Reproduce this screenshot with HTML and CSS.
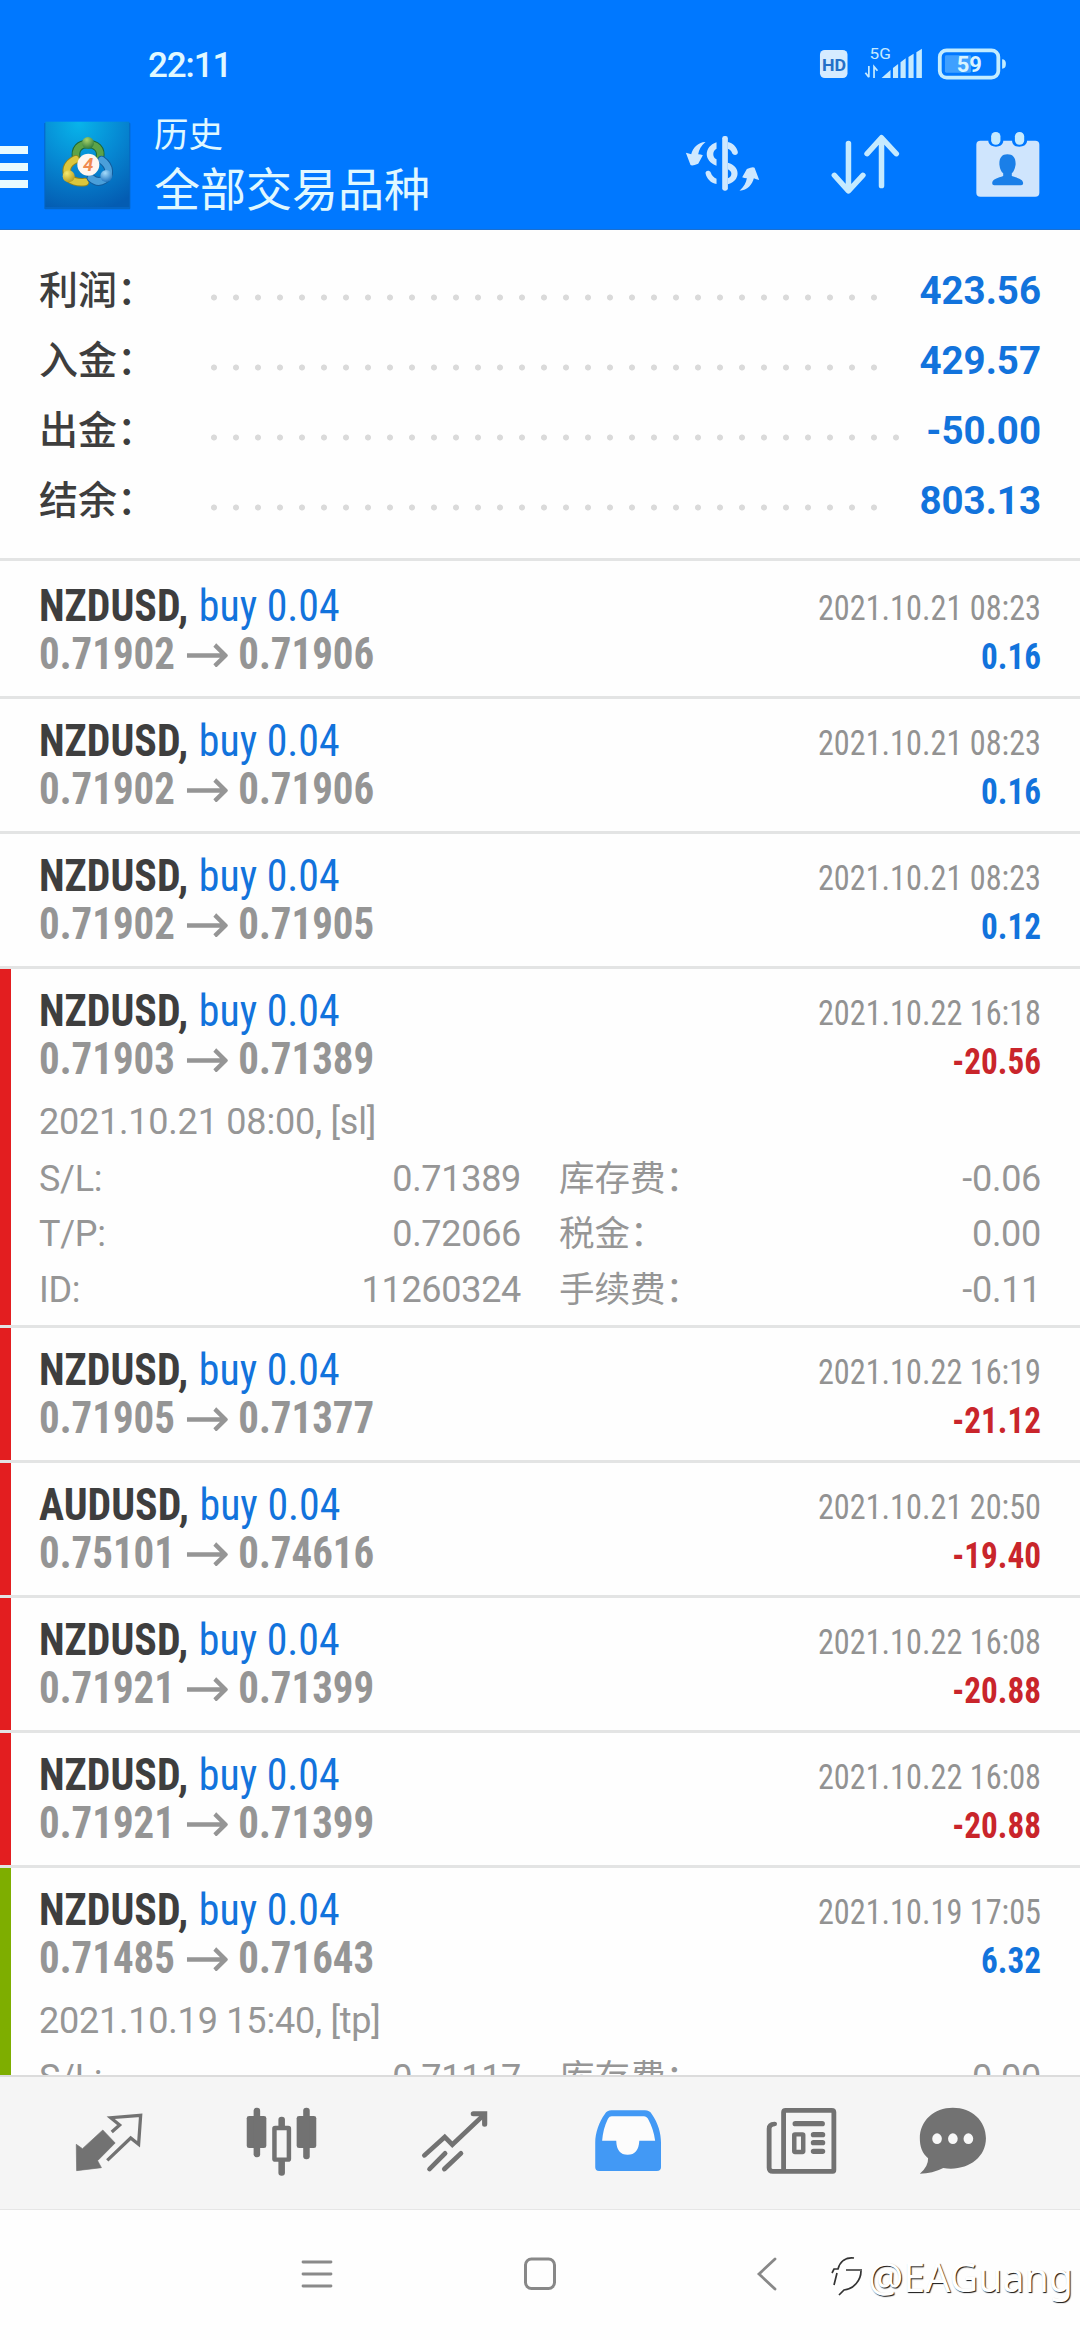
FILE: index.html
```html
<!DOCTYPE html>
<html lang="zh-CN">
<head>
<meta charset="utf-8">
<title>历史</title>
<link rel="stylesheet" href="styles.css">
</head>
<body>
<svg width="0" height="0" class="defs" aria-hidden="true">
  <symbol id="arrow" viewBox="0 0 44 24" preserveAspectRatio="none"><path d="M0 12.500H41M30 2L41.500 12.500L30 23" fill="none" stroke="#959595" stroke-width="4.500"/></symbol>
</svg>

<header class="header">
  <div class="status">
    <span class="time">22:11</span>
    <svg class="status-icons" viewBox="801.5 72 563.4 120" preserveAspectRatio="none">
      <rect x="813" y="90" width="80" height="84" rx="14" fill="#d5ebff"/>
      <text x="819" y="152" class="hd" textLength="70" lengthAdjust="spacingAndGlyphs">HD</text>
      <text x="957" y="116" class="net" textLength="62" lengthAdjust="spacingAndGlyphs">5G</text>
      <path d="M955 138V172M945 158L955 172M970 174V140L980 152" fill="none" stroke="#c5eaff" stroke-width="5"/>
      <path d="M992 174L1018 150V174ZM1025 174V144L1040 132V174ZM1047 174V127L1062 115V174ZM1070 174V111L1085 101V174ZM1093 174V97L1109 86V174Z" fill="#c5eaff"/>
      <rect x="1161" y="91" width="170" height="82" rx="20" fill="none" stroke="#c2ecff" stroke-width="11"/>
      <rect x="1176" y="106" width="76" height="52" rx="4" fill="#3fa0ff"/>
      <path d="M1342 118Q1353 118 1353 132T1342 146Z" fill="#c2ecff"/>
      <text x="1210" y="157" class="charge" textLength="73" lengthAdjust="spacingAndGlyphs">59</text>
    </svg>
  </div>
  <div class="appbar">
    <div class="burger"><i></i><i></i><i></i></div>
    <svg class="logo" viewBox="15 24 288 288">
      <defs>
        <radialGradient id="sky" cx=".4" cy=".02" r="1.05"><stop offset="0" stop-color="#08b4ea"/><stop offset=".5" stop-color="#0687d2"/><stop offset="1" stop-color="#045cb2"/></radialGradient>
        <radialGradient id="green" cx=".4" cy=".25" r=".8"><stop offset="0" stop-color="#a8d36a"/><stop offset="1" stop-color="#28763a"/></radialGradient>
        <radialGradient id="gold" cx=".35" cy=".25" r=".8"><stop offset="0" stop-color="#f6ea70"/><stop offset="1" stop-color="#b49a20"/></radialGradient>
        <radialGradient id="azure" cx=".4" cy=".25" r=".8"><stop offset="0" stop-color="#a5dcfb"/><stop offset="1" stop-color="#1a70bd"/></radialGradient>
      </defs>
      <rect x="28" y="38" width="258" height="260" rx="3" fill="#0565c2"/>
      <rect x="31" y="35" width="252" height="256" fill="url(#sky)"/>
      <g fill="none" stroke-linecap="round">
        <path d="M124 146C118 116 134 102 158 102S202 116 194 146" stroke="#1d6838" stroke-width="26"/>
        <path d="M124 146C118 116 134 102 158 102S202 116 194 146" stroke="#5da348" stroke-width="20"/>
        <path d="M122 148C92 162 90 186 102 205Q122 220 150 216" stroke="#8f8420" stroke-width="26"/>
        <path d="M122 148C92 162 90 186 102 205Q122 220 150 216" stroke="#dcc63c" stroke-width="20"/>
        <path d="M200 150C228 170 226 198 208 209Q188 222 168 204" stroke="#125c9c" stroke-width="26"/>
        <path d="M200 150C228 170 226 198 208 209Q188 222 168 204" stroke="#4a9fda" stroke-width="20"/>
      </g>
      <circle cx="159" cy="99" r="18" fill="url(#green)"/>
      <circle cx="101" cy="199" r="18" fill="url(#gold)"/>
      <circle cx="214" cy="198" r="18" fill="url(#azure)"/>
      <circle cx="160" cy="164" r="33" fill="#fff6ef"/>
      <text x="144" y="184" class="four">4</text>
    </svg>
    <div class="titles"><div class="sub">历史</div><div class="title">全部交易品种</div></div>
    <div class="actions">
      <svg viewBox="11.4 18 228 228" fill="#cfe8ff">
        <rect x="126" y="48" width="17" height="164" rx="7"/>
        <path d="M109 67C70 80 70 124 109 137V118C96 112 96 92 109 86ZM143 66C158 68 170 82 173 96C174 106 160 108 156 100Q153 89 143 86ZM76 160C75 151 88 149 92 158Q96 170 109 176V192C92 190 79 176 76 160ZM143 128C182 138 182 182 143 193V175C157 170 157 154 143 148Z"/>
        <path d="M17 98Q26 100 33 103C38 84 52 67 76 66C63 76 56 90 54 103Q62 103 68 106L54 131Q36 139 31 135Z"/>
        <path d="M17 98Q26 100 33 103C38 84 52 67 76 66C63 76 56 90 54 103Q62 103 68 106L54 131Q36 139 31 135Z" transform="rotate(180 127 139)"/>
      </svg>
      <svg viewBox="833.7 318 220.700 228" preserveAspectRatio="none">
        <path d="M896 370V512M855 466L896 513L938 466M992 354V497M950 401L992 353L1035 401" fill="none" stroke="#c5eaff" stroke-width="16" stroke-linecap="round" stroke-linejoin="round"/>
      </svg>
      <svg viewBox="1249.6 318 220.700 228" preserveAspectRatio="none">
        <rect x="1268" y="362" width="183" height="168" rx="12" fill="#cfe5fd"/>
        <path d="M1303 358H1346V366Q1342 380 1325 380T1303 366ZM1372 358H1415V366Q1411 380 1393 380T1372 366Z" fill="#0078ff"/>
        <rect x="1311" y="336" width="27" height="38" rx="13" fill="#c5eaff"/>
        <rect x="1380" y="336" width="27" height="38" rx="13" fill="#c5eaff"/>
        <path d="M1358 403C1375 403 1383 414 1382 434Q1379 452 1371 460V468C1386 474 1404 476 1404 490Q1404 496 1398 496H1320Q1314 496 1314 490C1314 476 1332 474 1346 468V460Q1337 452 1335 434C1334 414 1342 403 1358 403Z" fill="#1a7fe8"/>
      </svg>
    </div>
  </div>
</header>

<section class="summary">
  <div class="sum"><span>利润：</span><i></i><b>423.56</b></div>
  <div class="sum"><span>入金：</span><i></i><b>429.57</b></div>
  <div class="sum"><span>出金：</span><i></i><b>-50.00</b></div>
  <div class="sum"><span>结余：</span><i></i><b>803.13</b></div>
</section>

<main class="deals">
  <article class="deal first">
    <div class="head"><div class="left"><div class="sym"><b>NZDUSD,</b><span>buy 0.04</span></div><div class="price">0.71902<svg><use href="#arrow"/></svg>0.71906</div></div>
    <div class="right"><div class="date">2021.10.21 08:23</div><div class="pl">0.16</div></div></div>
  </article>
  <article class="deal">
    <div class="head"><div class="left"><div class="sym"><b>NZDUSD,</b><span>buy 0.04</span></div><div class="price">0.71902<svg><use href="#arrow"/></svg>0.71906</div></div>
    <div class="right"><div class="date">2021.10.21 08:23</div><div class="pl">0.16</div></div></div>
  </article>
  <article class="deal">
    <div class="head"><div class="left"><div class="sym"><b>NZDUSD,</b><span>buy 0.04</span></div><div class="price">0.71902<svg><use href="#arrow"/></svg>0.71905</div></div>
    <div class="right"><div class="date">2021.10.21 08:23</div><div class="pl">0.12</div></div></div>
  </article>
  <article class="deal open sl">
    <div class="head"><div class="left"><div class="sym"><b>NZDUSD,</b><span>buy 0.04</span></div><div class="price">0.71903<svg><use href="#arrow"/></svg>0.71389</div></div>
    <div class="right"><div class="date">2021.10.22 16:18</div><div class="pl loss">-20.56</div></div></div>
    <div class="note">2021.10.21 08:00, [sl]</div>
    <div class="details">
      <span>S/L:</span><span class="num">0.71389</span><span class="fee">库存费：</span><span class="num">-0.06</span>
      <span>T/P:</span><span class="num">0.72066</span><span class="fee">税金：</span><span class="num">0.00</span>
      <span>ID:</span><span class="num">11260324</span><span class="fee">手续费：</span><span class="num">-0.11</span>
    </div>
  </article>
  <article class="deal sl">
    <div class="head"><div class="left"><div class="sym"><b>NZDUSD,</b><span>buy 0.04</span></div><div class="price">0.71905<svg><use href="#arrow"/></svg>0.71377</div></div>
    <div class="right"><div class="date">2021.10.22 16:19</div><div class="pl loss">-21.12</div></div></div>
  </article>
  <article class="deal sl">
    <div class="head"><div class="left"><div class="sym"><b>AUDUSD,</b><span>buy 0.04</span></div><div class="price">0.75101<svg><use href="#arrow"/></svg>0.74616</div></div>
    <div class="right"><div class="date">2021.10.21 20:50</div><div class="pl loss">-19.40</div></div></div>
  </article>
  <article class="deal sl">
    <div class="head"><div class="left"><div class="sym"><b>NZDUSD,</b><span>buy 0.04</span></div><div class="price">0.71921<svg><use href="#arrow"/></svg>0.71399</div></div>
    <div class="right"><div class="date">2021.10.22 16:08</div><div class="pl loss">-20.88</div></div></div>
  </article>
  <article class="deal sl">
    <div class="head"><div class="left"><div class="sym"><b>NZDUSD,</b><span>buy 0.04</span></div><div class="price">0.71921<svg><use href="#arrow"/></svg>0.71399</div></div>
    <div class="right"><div class="date">2021.10.22 16:08</div><div class="pl loss">-20.88</div></div></div>
  </article>
  <article class="deal open tp">
    <div class="head"><div class="left"><div class="sym"><b>NZDUSD,</b><span>buy 0.04</span></div><div class="price">0.71485<svg><use href="#arrow"/></svg>0.71643</div></div>
    <div class="right"><div class="date">2021.10.19 17:05</div><div class="pl">6.32</div></div></div>
    <div class="note">2021.10.19 15:40, [tp]</div>
    <div class="details">
      <span>S/L:</span><span class="num">0.71117</span><span class="fee">库存费：</span><span class="num">0.00</span>
    </div>
  </article>
</main>

<nav class="tabs">
  <svg viewBox="210.5 789 209.100 234" preserveAspectRatio="none">
    <path d="M220 913L238 926L297 870L333 909L282 962L293 983L221 992Z" fill="#727272" stroke="#727272" stroke-width="2" stroke-linejoin="round"/>
    <path d="M323 876L346 855L320 833L407 826L401 913L378 894L310 961" fill="none" stroke="#727272" stroke-width="9.500"/>
  </svg>
  <svg viewBox="712.9 789 209.100 234" preserveAspectRatio="none" fill="#727272">
    <rect x="715" y="828" width="57" height="96" rx="7"/><rect x="735" y="803" width="19" height="149" rx="9"/>
    <rect x="860" y="828" width="57" height="96" rx="7"/><rect x="879" y="803" width="19" height="155" rx="9"/>
    <rect x="807" y="830" width="19" height="40" rx="9"/><rect x="807" y="955" width="19" height="52" rx="9"/>
    <rect x="795.500" y="864" width="42" height="95" rx="2" fill="none" stroke="#727272" stroke-width="13"/>
  </svg>
  <svg viewBox="1215.3 789 209.100 234" preserveAspectRatio="none">
    <path d="M1231 946L1290 891L1312 914L1402 826M1246 987L1291 940M1289 987L1337 940" fill="none" stroke="#727272" stroke-width="14" stroke-linecap="round"/>
    <path d="M1373 821H1406V853" fill="none" stroke="#727272" stroke-width="15" stroke-linecap="round"/>
  </svg>
  <svg viewBox="149.6 789 209.100 234" preserveAspectRatio="none">
    <path d="M206 811H303Q317 811 323 822C342 850 350 880 350 908V982Q350 993 338 993H170Q159 993 159 982V908C159 880 170 845 187 822Q193 811 206 811Z" fill="#4299f5"/>
    <path d="M179 902H220Q221 944 253 944T287 902H333C330 878 322 856 314 840Q309 829 300 829H207Q200 829 196 836C186 856 181 878 179 902Z" fill="#fcfcfc"/>
  </svg>
  <svg viewBox="652 789 209.100 234" preserveAspectRatio="none" fill="none" stroke="#727272" stroke-linecap="round">
    <path d="M706 994H849Q852 994 852 989V817Q852 811 846 811H712Q706 811 706 817V994H675Q664 994 664 983V866Q664 853 680 852" stroke-width="14"/>
    <path d="M740 851H818M793 884H819M793 908H819M793 934H819" stroke-width="16"/>
    <rect x="737" y="883" width="26" height="53" rx="2" stroke-width="13"/>
  </svg>
  <svg viewBox="1094.8 789 209.100 234" preserveAspectRatio="none">
    <path d="M1199 803C1254 803 1295 842 1295 895C1295 957 1236 995 1171 984Q1140 1001 1103 1001Q1128 980 1127 955C1110 940 1103 920 1103 895C1103 842 1144 803 1199 803Z" fill="#727272"/>
    <ellipse cx="1153" cy="896" rx="14" ry="16" fill="#f8f8f8"/><ellipse cx="1199" cy="896" rx="14" ry="16" fill="#f8f8f8"/><ellipse cx="1244" cy="896" rx="14" ry="16" fill="#f8f8f8"/>
  </svg>
</nav>

<footer class="sysnav">
  <svg width="36" height="40" viewBox="0 0 36 40"><path d="M4 8H32M4 20H32M4 32H32" stroke="#8a8a8a" stroke-width="2.800" stroke-linecap="round"/></svg>
  <svg width="36" height="40" viewBox="0 0 36 40"><rect x="3.500" y="5" width="29" height="29.500" rx="6" fill="none" stroke="#888" stroke-width="3"/></svg>
  <svg width="36" height="40" viewBox="0 0 36 40"><path d="M26 5L10 20L26 35" fill="none" stroke="#888" stroke-width="2.800" stroke-linecap="round"/></svg>
</footer>

<div class="watermark">
  <svg width="36" height="46" viewBox="0 0 36 46"><path d="M2 20L4 16H8C10 8 16 4 24 5M31 18C31 27 24 36 14 37L9 42M4 32L7 20M16 17H32" fill="none" stroke="#333" stroke-width="1.700"/></svg>
  <span>@EAGuang</span>
</div>
</body>
</html>
```
FILE: styles.css
```css
* { box-sizing: border-box; }
body {
  margin: 0;
  width: 1080px;
  height: 2340px;
  overflow: hidden;
  display: flex;
  flex-direction: column;
  position: relative;
  background: #fefefe;
  font-family: Roboto, "Noto Sans CJK SC", sans-serif;
  color: #3e3e3e;
}
svg { display: block; flex: none; }
.defs { position: absolute; }

.header { height: 230px; flex: none; background: #0078ff; color: #e0f8ff; border-bottom: 1px solid #1b6fd0; }
.status { height: 84px; display: flex; justify-content: space-between; padding: 0 70px 0 148px; align-items: flex-end; }
.time { font-size: 35px; font-weight: 500; line-height: 37px; letter-spacing: -1.1px; }
.status-icons { width: 194px; height: 40px; }
.hd { font: 700 49px Roboto, sans-serif; fill: #2470c8; }
.net { font: 400 46px Roboto, sans-serif; fill: #c5eaff; }
.charge { font: 700 66px Roboto, sans-serif; fill: #d8f4ff; }
.appbar { display: flex; align-items: flex-start; }
.burger { width: 28px; margin-top: 62px; display: grid; gap: 9.500px; }
.burger i { height: 7.500px; background: #e8fbff; }
.logo { width: 96px; height: 96px; margin: 34px 18px 0 12px; }
.four { font: italic 700 56px Roboto, sans-serif; fill: #f08a50; }
.titles { padding-top: 31px; font-weight: 400; flex: 1; }
.sub { font-size: 34.500px; line-height: 40px; }
.title { font-size: 46px; line-height: 55px; margin-top: 8px; }
.actions { display: flex; gap: 67.300px; padding: 42px 33.700px 0 0; }
.actions svg { width: 76px; height: 76px; }

.summary { height: 331px; flex: none; padding: 26px 39px 0 39px; border-bottom: 3px solid #e3e4e4; }
.sum { height: 70px; display: flex; align-items: center; font-size: 39px; line-height: 70px; }
.sum span { width: 163.500px; font-weight: 500; }
.sum b { color: #1273dc; font-weight: 700; font-size: 38.500px; }
.sum i { flex: 1; height: 7px; margin: 13px 27px 0 0; background: radial-gradient(circle at 11px 3.500px, #dadada 2.600px, transparent 3.400px) 0 0 / 22px 7px repeat-x; }

.deals { flex: none; height: 1514px; overflow: hidden; }
.deal { height: 135px; padding: 18px 39px 0; border-bottom: 3px solid #e3e4e4; }
.deal.first { height: 138px; padding-top: 21px; }
.deal.open { height: 359px; }
.deal.sl { box-shadow: inset 11px 0 #e31e20; }
.deal.tp { box-shadow: inset 11px 0 #7eae00; }
.head { display: flex; justify-content: space-between; font-family: "Roboto Condensed", Roboto, sans-serif; line-height: 48px; }
.sym { display: flex; font-size: 44px; gap: 11px; transform: scaleX(.951); transform-origin: left; }
.sym span { color: #1273dc; }
.price { display: flex; align-items: center; font-size: 44px; font-weight: 700; color: #959595; transform: scaleX(.93); transform-origin: left; }
.price svg { width: 44px; height: 24px; margin: 2px 11px 0 13px; }
.right { padding-top: 3px; text-align: right; font-size: 35px; transform: scaleX(.922); transform-origin: right; }
.date { color: #929292; }
.pl { font-weight: 700; font-size: 36px; color: #1273dc; }
.pl.loss { color: #c9252b; }
.note { margin-top: 9px; margin-bottom: 1px; letter-spacing: -.22px; }
.note, .details { font-size: 36px; font-weight: 400; line-height: 55.500px; color: #969696; }
.details { display: grid; grid-template-columns: 160px 322px 200px 320px; }
.details span:not(.fee) { letter-spacing: -.3px; }
.num { text-align: right; }
.fee { padding-left: 38px; font-size: 35.500px; white-space: nowrap; }

.tabs { height: 135px; flex: none; display: flex; gap: 101px; padding: 26px 0 0 72.500px; background: #f5f5f5; border-top: 2px solid #dcdcdc; border-bottom: 1px solid #e6e6e6; }
.tabs svg { width: 72px; height: 78px; }
.tabs svg:last-child { margin-left: -20.500px; }

.sysnav { flex: 1; display: flex; gap: 187px; padding: 44px 0 0 299px; }
.sysnav svg:last-child { margin-left: 4px; }

.watermark { position: absolute; left: 830px; top: 2253px; display: flex; align-items: flex-start; }
.watermark span { margin-left: 2px; font: 400 39.300px/48px "Noto Sans", sans-serif; color: #fff; text-shadow: 1px 1px 1px #111; }
```
